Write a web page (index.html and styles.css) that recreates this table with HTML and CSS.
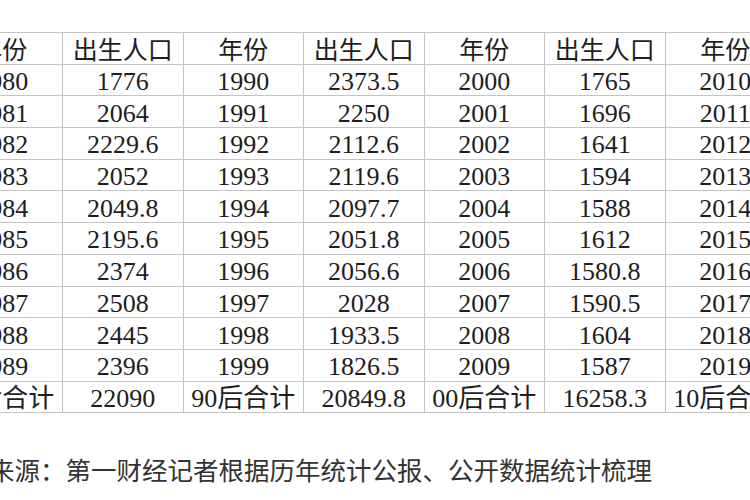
FILE: index.html
```html
<!DOCTYPE html>
<html lang="zh-CN">
<head>
<meta charset="utf-8">
<link rel="stylesheet" href="styles.css">
</head>
<body>
<div class="page">
  <table class="grid">
    <tr class="head"><td>年份</td><td>出生人口</td><td>年份</td><td>出生人口</td><td>年份</td><td>出生人口</td><td>年份</td></tr>
    <tr><td>1980</td><td>1776</td><td>1990</td><td>2373.5</td><td>2000</td><td>1765</td><td>2010</td></tr>
    <tr><td>1981</td><td>2064</td><td>1991</td><td>2250</td><td>2001</td><td>1696</td><td>2011</td></tr>
    <tr><td>1982</td><td>2229.6</td><td>1992</td><td>2112.6</td><td>2002</td><td>1641</td><td>2012</td></tr>
    <tr><td>1983</td><td>2052</td><td>1993</td><td>2119.6</td><td>2003</td><td>1594</td><td>2013</td></tr>
    <tr><td>1984</td><td>2049.8</td><td>1994</td><td>2097.7</td><td>2004</td><td>1588</td><td>2014</td></tr>
    <tr><td>1985</td><td>2195.6</td><td>1995</td><td>2051.8</td><td>2005</td><td>1612</td><td>2015</td></tr>
    <tr><td>1986</td><td>2374</td><td>1996</td><td>2056.6</td><td>2006</td><td>1580.8</td><td>2016</td></tr>
    <tr><td>1987</td><td>2508</td><td>1997</td><td>2028</td><td>2007</td><td>1590.5</td><td>2017</td></tr>
    <tr><td>1988</td><td>2445</td><td>1998</td><td>1933.5</td><td>2008</td><td>1604</td><td>2018</td></tr>
    <tr><td>1989</td><td>2396</td><td>1999</td><td>1826.5</td><td>2009</td><td>1587</td><td>2019</td></tr>
    <tr><td>80后合计</td><td>22090</td><td>90后合计</td><td>20849.8</td><td>00后合计</td><td>16258.3</td><td>10后合计</td></tr>
  </table>
  <p class="source">数据来源：第一财经记者根据历年统计公报、公开数据统计梳理</p>
</div>
</body>
</html>
```

FILE: styles.css
```css
html, body {
  margin: 0;
  padding: 0;
  background: #ffffff;
}
body {
  width: 750px;
  height: 500px;
  overflow: hidden;
}
.page {
  padding-top: 32px;
  margin-left: -58.5px;
}
.grid {
  border-collapse: collapse;
  table-layout: fixed;
  width: 843.5px;
  font-family: "Liberation Serif", "Noto Sans CJK SC", serif;
  font-size: 26px;
  color: #1e1e1e;
}
.grid tr {
  height: 31.7px;
}
.grid td {
  width: 119.5px;
  padding: 3px 0 0 0;
  border: 1px solid #c4c4c4;
  text-align: center;
  line-height: 27px;
  white-space: nowrap;
  overflow: hidden;
}
.grid .head td {
  font-family: "Noto Sans CJK SC", sans-serif;
  font-size: 25px;
  padding-top: 1px;
}
.source {
  margin: 41px 0 0 -3.5px;
  font-family: "Noto Sans CJK SC", sans-serif;
  font-size: 25.5px;
  line-height: 30px;
  color: #333333;
  white-space: nowrap;
}
```
